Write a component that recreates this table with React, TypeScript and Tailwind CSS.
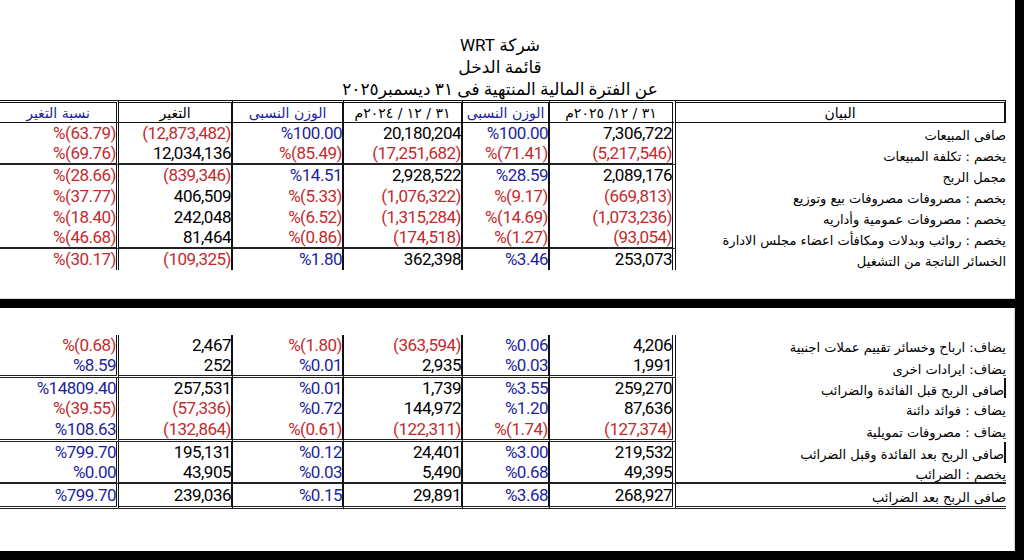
import React from 'react';

type Tone = 'k' | 'r' | 'b';
type Cell = [string, Tone];
type Line = 'none' | 'single' | 'double';

interface RowData {
  cells: Cell[];
  label: string;
  h: string;
  line?: Line;
  lineLabel?: boolean;
  bar?: boolean;
}

const toneClass: Record<Tone, string> = {
  k: 'text-black',
  r: 'text-[#c42a2c]',
  b: 'text-[#1d1f9c]',
};

const grid = 'grid grid-cols-[119px_114px_111px_119px_87px_126px_330px]';

// right border of each numeric column, left to right
const vline = [
  'border-r-[3px] [border-right-style:double] border-r-[#111]',
  'border-r-2 border-r-[#111]',
  'border-r-2 border-r-[#111]',
  'border-r-2 border-r-[#111]',
  'border-r-2 border-r-[#111]',
  'border-r-[4px] [border-right-style:double] border-r-[#111]',
];

const hline: Record<Line, string> = {
  none: '',
  single: 'border-b-2 border-b-[#222]',
  double: 'border-b-[3px] [border-bottom-style:double] border-b-[#222]',
};

const numFont = "font-['Roboto','DejaVu_Sans',sans-serif]";
const arFont = "font-['DejaVu_Sans','Noto_Sans',sans-serif]";

const topRows: RowData[] = [
  { h: 'h-[21px]', label: 'صافى المبيعات', cells: [['%(63.79)', 'r'], ['(12,873,482)', 'r'], ['%100.00', 'b'], ['20,180,204', 'k'], ['%100.00', 'b'], ['7,306,722', 'k']] },
  { h: 'h-[21px]', line: 'single', label: 'يخصم : تكلفة المبيعات', cells: [['%(69.76)', 'r'], ['12,034,136', 'k'], ['%(85.49)', 'r'], ['(17,251,682)', 'r'], ['%(71.41)', 'r'], ['(5,217,546)', 'r']] },
  { h: 'h-[21px]', label: 'مجمل الربح', cells: [['%(28.66)', 'r'], ['(839,346)', 'r'], ['%14.51', 'b'], ['2,928,522', 'k'], ['%28.59', 'b'], ['2,089,176', 'k']] },
  { h: 'h-[21px]', label: 'يخصم : مصروفات مصروفات بيع وتوزيع', cells: [['%(37.77)', 'r'], ['406,509', 'k'], ['%(5.33)', 'r'], ['(1,076,322)', 'r'], ['%(9.17)', 'r'], ['(669,813)', 'r']] },
  { h: 'h-[21px]', label: 'يخصم : مصروفات عمومية وأداريه', cells: [['%(18.40)', 'r'], ['242,048', 'k'], ['%(6.52)', 'r'], ['(1,315,284)', 'r'], ['%(14.69)', 'r'], ['(1,073,236)', 'r']] },
  { h: 'h-[21px]', line: 'single', label: 'يخصم : روائب وبدلات ومكافأت اعضاء مجلس الادارة', cells: [['%(46.68)', 'r'], ['81,464', 'k'], ['%(0.86)', 'r'], ['(174,518)', 'r'], ['%(1.27)', 'r'], ['(93,054)', 'r']] },
  { h: 'h-[21px]', label: 'الخسائر الناتجة من التشغيل', cells: [['%(30.17)', 'r'], ['(109,325)', 'r'], ['%1.80', 'b'], ['362,398', 'k'], ['%3.46', 'b'], ['253,073', 'k']] },
];

const bottomRows: RowData[] = [
  { h: 'h-[21px]', label: 'يضاف: ارباح وخسائر تقييم عملات اجنبية', cells: [['%(0.68)', 'r'], ['2,467', 'k'], ['%(1.80)', 'r'], ['(363,594)', 'r'], ['%0.06', 'b'], ['4,206', 'k']] },
  { h: 'h-[22px]', line: 'double', label: 'يضاف: ايرادات اخرى', cells: [['%8.59', 'b'], ['252', 'k'], ['%0.01', 'b'], ['2,935', 'k'], ['%0.03', 'b'], ['1,991', 'k']] },
  { h: 'h-[20px]', bar: true, label: 'صافى الربح قبل الفائدة والضرائب', cells: [['%14809.40', 'b'], ['257,531', 'k'], ['%0.01', 'b'], ['1,739', 'k'], ['%3.55', 'b'], ['259,270', 'k']] },
  { h: 'h-[21px]', label: 'يضاف : فوائد دائنة', cells: [['%(39.55)', 'r'], ['(57,336)', 'r'], ['%0.72', 'b'], ['144,972', 'k'], ['%1.20', 'b'], ['87,636', 'k']] },
  { h: 'h-[23px]', line: 'double', label: 'يضاف : مصروفات تمويلية', cells: [['%108.63', 'b'], ['(132,864)', 'r'], ['%(0.61)', 'r'], ['(122,311)', 'r'], ['%(1.74)', 'r'], ['(127,374)', 'r']] },
  { h: 'h-[21px]', bar: true, label: 'صافى الربح بعد الفائدة وقبل الضرائب', cells: [['%799.70', 'b'], ['195,131', 'k'], ['%0.12', 'b'], ['24,401', 'k'], ['%3.00', 'b'], ['219,532', 'k']] },
  { h: 'h-[21px]', line: 'single', lineLabel: true, label: 'يخصم : الضرائب', cells: [['%0.00', 'b'], ['43,905', 'k'], ['%0.03', 'b'], ['5,490', 'k'], ['%0.68', 'b'], ['49,395', 'k']] },
  { h: 'h-[25px]', line: 'double', lineLabel: true, label: 'صافى الربح بعد الضرائب', cells: [['%799.70', 'b'], ['239,036', 'k'], ['%0.15', 'b'], ['29,891', 'k'], ['%3.68', 'b'], ['268,927', 'k']] },
];

const headers: Cell[] = [
  ['نسبة التغير', 'b'],
  ['التغير', 'k'],
  ['الوزن النسبى', 'b'],
  ['٣١ / ١٢ / ٢٠٢٤م', 'k'],
  ['الوزن النسبى', 'b'],
  ['٣١ / ١٢/ ٢٠٢٥م', 'k'],
];

function Row({ row }: { row: RowData }) {
  const line = hline[row.line ?? 'none'];
  return (
    <div className={`${grid} ${row.h}`}>
      {row.cells.map(([text, t], i) => (
        <div
          key={i}
          dir="ltr"
          className={`flex items-center justify-end ${vline[i]} ${line} ${toneClass[t]} ${numFont} text-[17px] tracking-[-0.5px] leading-none whitespace-nowrap`}
        >
          {text}
        </div>
      ))}
      <div
        dir="rtl"
        className={`flex items-center justify-start pt-1 ${row.lineLabel ? line : ''} ${row.bar ? 'border-r-2 border-r-[#111]' : ''} ${arFont} text-[13px] leading-none text-black whitespace-nowrap`}
      >
        {row.label}
      </div>
    </div>
  );
}

function HeaderRow() {
  const edge = 'border-t-[3px] [border-top-style:double] border-t-[#111] border-b border-b-[#111]';
  return (
    <div className={`${grid} h-[23px]`}>
      {headers.map(([text, t], i) => (
        <div
          key={i}
          dir="rtl"
          className={`flex items-center justify-center ${edge} ${vline[i]} ${toneClass[t]} ${arFont} text-[14px] leading-none whitespace-nowrap`}
        >
          {text}
        </div>
      ))}
      <div
        dir="rtl"
        className={`flex items-center justify-center ${edge} border-r-2 border-r-[#111] ${arFont} text-[14px] leading-none text-black`}
      >
        البيان
      </div>
    </div>
  );
}

export default function App() {
  return (
    <div className="w-[1024px] h-[560px] bg-black flex flex-col overflow-hidden">
      <div className="w-[1015px] h-[299px] bg-white border-b border-b-gray-300 shrink-0">
        <div
          dir="rtl"
          className={`w-[1000px] pt-[34px] flex flex-col items-center text-black ${numFont} text-[17px] leading-[22px]`}
        >
          <div>شركة WRT</div>
          <div>قائمة الدخل</div>
          <div>عن الفترة المالية المنتهية فى ٣١ ديسمبر٢٠٢٥</div>
        </div>
        <div className="w-[1006px]">
          <HeaderRow />
          {topRows.map((r, i) => (
            <Row key={i} row={r} />
          ))}
        </div>
      </div>
      <div className="h-[9px] shrink-0" />
      <div className="w-[1015px] h-[243px] bg-white border-r border-r-gray-300 shrink-0 pt-[27px]">
        <div className="w-[1006px]">
          {bottomRows.map((r, i) => (
            <Row key={i} row={r} />
          ))}
        </div>
      </div>
    </div>
  );
}
